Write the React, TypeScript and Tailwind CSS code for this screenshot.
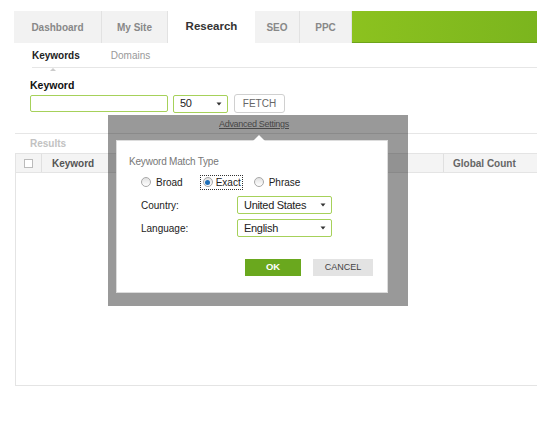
import React from 'react';

const tabs = [
  { label: 'Dashboard', w: 'w-[88px]' },
  { label: 'My Site', w: 'w-[66px]' },
  { label: 'Research', w: 'w-[87px]', active: true },
  { label: 'SEO', w: 'w-[45px]' },
  { label: 'PPC', w: 'w-[52px]' },
];

const Caret = () => (
  <svg width="6" height="4" viewBox="0 0 6 4" className="shrink-0">
    <path d="M0.5 0.5h5L3 3.5z" fill="#333" />
  </svg>
);

const Radio = ({ checked }: { checked?: boolean }) => (
  <span className="w-[10px] h-[10px] rounded-full border border-[#a8a8a8] bg-gradient-to-b from-[#e2e2e2] to-white flex items-center justify-center shrink-0">
    {checked && <span className="w-[5px] h-[5px] rounded-full bg-[#1f6fb8]" />}
  </span>
);

const Select = ({ value, w }: { value: string; w: string }) => (
  <div className={`${w} h-[18px] border border-[#a6d15a] rounded-[2px] bg-white flex items-center justify-between pl-[6px] pr-[5px] text-[11px] tracking-[-0.3px] text-[#222]`}>
    <span>{value}</span>
    <Caret />
  </div>
);

export default function App() {
  return (
    <div className="relative w-[552px] h-[421px] bg-white overflow-hidden font-['Liberation_Sans',Arial,sans-serif]">
      {/* top tabs */}
      <div className="pt-[11px] pl-[14px] pr-[15px]">
        <div className="flex h-[32px]">
          {tabs.map((t) => (
            <div
              key={t.label}
              className={
                t.active
                  ? `${t.w} bg-white flex items-center justify-center text-[11.5px] font-bold text-[#333]`
                  : `${t.w} bg-[#f2f2f2] border-r border-[#e2e2e2] flex items-center justify-center text-[10px] font-bold text-[#888]`
              }
            >
              {t.label}
            </div>
          ))}
          <div className="flex-1 bg-gradient-to-r from-[#8cc21f] to-[#7bb51e] border-b border-[#6da41a]" />
        </div>
      </div>

      {/* sub tabs */}
      <div className="ml-[32px] mr-[15px] h-[25px] border-b border-[#e6e6e6] flex items-center gap-[31px] text-[10px] font-bold">
        <span className="relative text-[#222]">
          Keywords
          <span className="absolute left-[18px] -bottom-[8px] w-0 h-0 border-x-[3px] border-x-transparent border-b-[3px] border-b-[#ccc]" />
        </span>
        <span className="text-[#999] font-normal">Domains</span>
      </div>

      {/* keyword form */}
      <div className="pl-[30px] pt-[10px]">
        <div className="text-[10.5px] font-bold text-[#111] leading-[14px]">Keyword</div>
        <div className="mt-[2px] flex items-center gap-[5px]">
          <div className="w-[138px] h-[17px] border border-[#a6d15a] rounded-[2px] bg-white" />
          <Select value="50" w="w-[55px]" />
          <button className="ml-[1px] w-[51px] h-[19px] border border-[#d0d0d0] rounded-[3px] bg-white text-[10px] text-[#666]">
            FETCH
          </button>
        </div>
        <div className="mt-[5px] ml-[189px] text-[9px] tracking-[-0.3px] text-[#777] underline leading-[12px]">Advanced Settings</div>
      </div>

      {/* results */}
      <div className="mt-[3px] ml-[15px] mr-[15px] border-t border-[#e6e6e6]">
        <div className="h-[19px] flex items-center pl-[15px] text-[10px] font-bold text-[#c2c2c2]">Results</div>
        <div className="h-[233px] border-l border-b border-[#e4e4e4]">
          <div className="h-[20px] bg-[#f4f4f4] border-y border-[#e4e4e4] flex text-[10px] font-bold text-[#777]">
            <div className="w-[26px] border-r border-[#e0e0e0] flex items-center justify-center">
              <span className="w-[9px] h-[9px] border border-[#bbb] bg-white" />
            </div>
            <div className="flex-1 flex items-center pl-[10px] text-[#555]">Keyword</div>
            <div className="w-[94px] border-l border-[#e0e0e0] flex items-center pl-[9px] text-[#666]">Global Count</div>
          </div>
        </div>
      </div>

      {/* advanced settings overlay */}
      <div className="absolute left-[108px] top-[115px] w-[300px] h-[191px] bg-black/40 pl-[8px] pt-[25px]">
        <div className="relative w-[272px] h-[153px] bg-white border border-[#dcdcdc] px-[12px] pt-[14px] text-[12px] text-[#333]">
          <span className="absolute left-[136px] -top-[6px] w-0 h-0 border-x-[6px] border-x-transparent border-b-[6px] border-b-white" />
          <div className="text-[10px] tracking-[-0.2px] text-[#777] leading-[14px]">Keyword Match Type</div>
          <div className="mt-[5px] ml-[12px] flex items-center h-[16px] text-[10px] text-[#222]">
            <label className="flex items-center gap-[5px]">
              <Radio />
              Broad
            </label>
            <label className="ml-[17px] flex items-center gap-[3px] border border-dotted border-[#333] pl-[2px] pr-[1px] h-[15px]">
              <Radio checked />
              Exact
            </label>
            <label className="ml-[11px] flex items-center gap-[5px]">
              <Radio />
              Phrase
            </label>
          </div>
          <div className="mt-[6px] ml-[12px] flex items-center h-[18px]">
            <span className="w-[96px] text-[10px] text-[#222]">Country:</span>
            <Select value="United States" w="w-[95px]" />
          </div>
          <div className="mt-[5px] ml-[12px] flex items-center h-[18px]">
            <span className="w-[96px] text-[10px] text-[#222]">Language:</span>
            <Select value="English" w="w-[95px]" />
          </div>
          <div className="mt-[22px] ml-[116px] flex gap-[12px]">
            <button className="w-[56px] h-[17px] bg-[#6aa81e] text-white text-[9.5px] font-bold">OK</button>
            <button className="w-[60px] h-[17px] bg-[#e3e3e3] text-[#444] text-[9px]">CANCEL</button>
          </div>
        </div>
      </div>
    </div>
  );
}
